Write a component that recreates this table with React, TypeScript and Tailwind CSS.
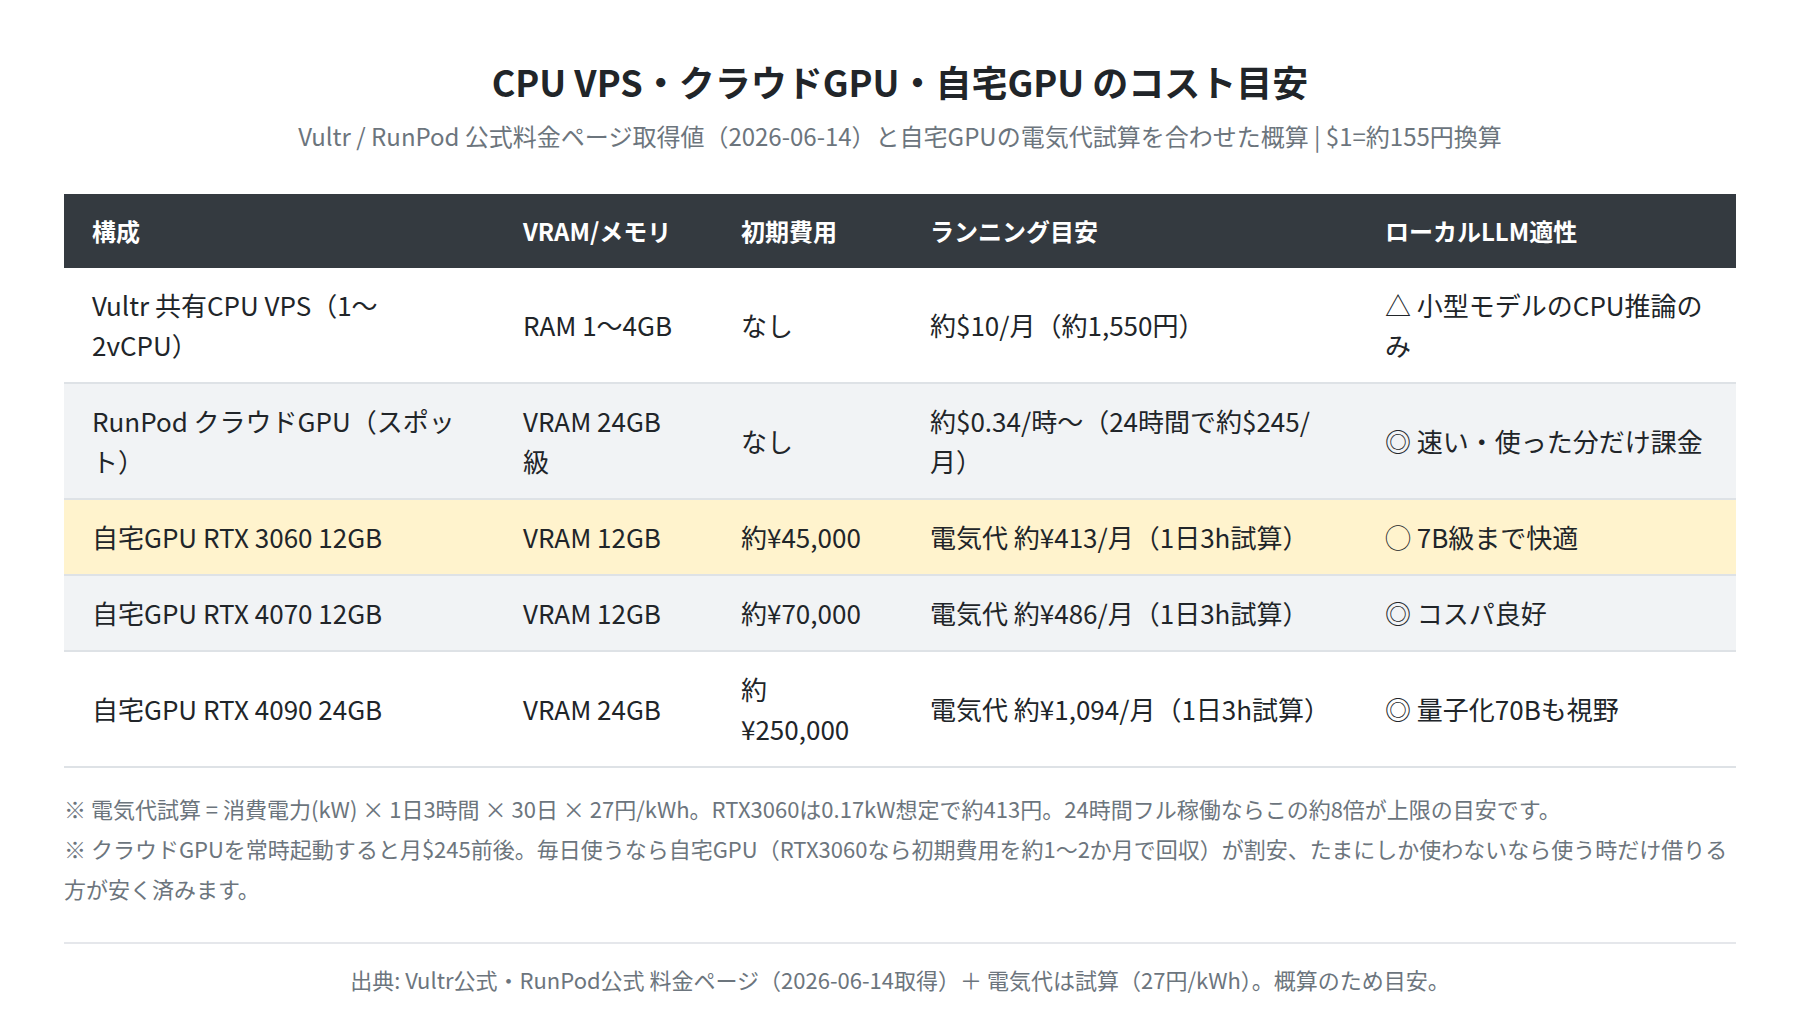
import React from "react";

type Row = {
  config: string;
  memory: string;
  initial: string;
  running: string;
  fit: string;
  tone: "white" | "gray" | "yellow";
};

const rows: Row[] = [
  {
    config: "Vultr 共有CPU VPS（1〜2vCPU）",
    memory: "RAM 1〜4GB",
    initial: "なし",
    running: "約$10/月（約1,550円）",
    fit: "△ 小型モデルのCPU推論のみ",
    tone: "white"
  },
  {
    config: "RunPod クラウドGPU（スポット）",
    memory: "VRAM 24GB級",
    initial: "なし",
    running: "約$0.34/時〜（24時間で約$245/月）",
    fit: "◎ 速い・使った分だけ課金",
    tone: "gray"
  },
  {
    config: "自宅GPU RTX 3060 12GB",
    memory: "VRAM 12GB",
    initial: "約¥45,000",
    running: "電気代 約¥413/月（1日3h試算）",
    fit: "◯ 7B級まで快適",
    tone: "yellow"
  },
  {
    config: "自宅GPU RTX 4070 12GB",
    memory: "VRAM 12GB",
    initial: "約¥70,000",
    running: "電気代 約¥486/月（1日3h試算）",
    fit: "◎ コスパ良好",
    tone: "gray"
  },
  {
    config: "自宅GPU RTX 4090 24GB",
    memory: "VRAM 24GB",
    initial: "約¥250,000",
    running: "電気代 約¥1,094/月（1日3h試算）",
    fit: "◎ 量子化70Bも視野",
    tone: "white"
  }
];

const toneClass = {
  white: "bg-white",
  gray: "bg-[#f1f3f5]",
  yellow: "bg-[#fff3cd]"
};

const headers = ["構成", "VRAM/メモリ", "初期費用", "ランニング目安", "ローカルLLM適性"];

export default function App() {
  return (
    <div className="min-h-screen bg-white px-16 pt-[56px] pb-10 text-[#212529] [font-family:'Noto_Sans_CJK_JP','Noto_Sans',sans-serif]">
      <h1 className="text-center text-[36px] font-bold leading-[50px] text-[#212529]">
        CPU VPS・クラウドGPU・自宅GPU のコスト目安
      </h1>
      <p className="mt-[13px] text-center text-[24px] leading-[34px] text-[#6c757d]">
        Vultr / RunPod 公式料金ページ取得値（2026-06-14）と自宅GPUの電気代試算を合わせた概算 | $1=約155円換算
      </p>

      <table className="mt-[41px] w-full table-fixed border-collapse text-left">
        <colgroup>
          <col className="w-[431px]" />
          <col className="w-[218px]" />
          <col className="w-[189px]" />
          <col className="w-[455px]" />
          <col />
        </colgroup>
        <thead>
          <tr className="bg-[#343a40] text-white">
            {headers.map((h) => (
              <th key={h} className="h-[74px] pr-8 pl-7 text-[24px] font-bold">
                {h}
              </th>
            ))}
          </tr>
        </thead>
        <tbody>
          {rows.map((row) => (
            <tr key={row.config} className={`${toneClass[row.tone]} border-b-2 border-[#dee2e6]`}>
              {[row.config, row.memory, row.initial, row.running, row.fit].map((cell, i) => (
                <td key={i} className="py-[17px] pr-8 pl-7 align-middle text-[26px] leading-[40px] text-[#212529]">
                  {cell}
                </td>
              ))}
            </tr>
          ))}
        </tbody>
      </table>

      <div className="mt-5 text-[22px] leading-[40px] text-[#6c757d]">
        <p>
          ※ 電気代試算 = 消費電力(kW) × 1日3時間 × 30日 × 27円/kWh。RTX3060は0.17kW想定で約413円。24時間フル稼働ならこの約8倍が上限の目安です。
        </p>
        <p>
          ※ クラウドGPUを常時起動すると月$245前後。毎日使うなら自宅GPU（RTX3060なら初期費用を約1〜2か月で回収）が割安、たまにしか使わないなら使う時だけ借りる方が安く済みます。
        </p>
      </div>

      <div className="mt-[34px] border-t-2 border-[#e5e7eb] pt-[18px] text-center text-[22px] leading-[34px] text-[#6c757d]">
        出典: Vultr公式・RunPod公式 料金ページ（2026-06-14取得）＋ 電気代は試算（27円/kWh）。概算のため目安。
      </div>
    </div>
  );
}
